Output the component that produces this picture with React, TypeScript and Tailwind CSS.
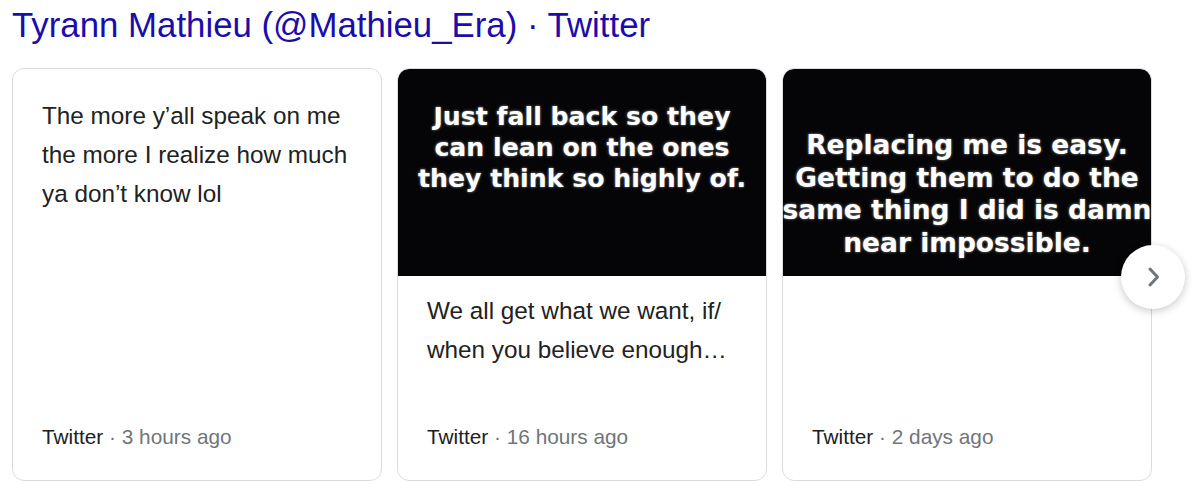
import React from "react";

const imgFont = {
  fontFamily: '"Comic Sans MS", "DejaVu Sans", sans-serif',
};

function Footer({ when }: { when: string }) {
  return (
    <div className="px-[29px] pb-[29px] text-[20.8px] leading-[28px] whitespace-nowrap">
      <span className="text-[#202124]">Twitter</span>
      <span className="text-[#70757a]"> · {when}</span>
    </div>
  );
}

export default function App() {
  return (
    <div
      className="relative w-[1198px] h-[484px] bg-white overflow-hidden"
      style={{ fontFamily: '"Liberation Sans", Arial, sans-serif' }}
    >
      <div className="pl-[12px] pt-[5px] text-[34.8px] leading-[40px] text-[#1a0dab] whitespace-nowrap">
        Tyrann Mathieu (@Mathieu_Era) · Twitter
      </div>

      <div className="flex gap-[15px] pl-[12px] mt-[23px]">
        {/* Card 1 */}
        <div className="w-[370px] h-[413px] shrink-0 border border-[#dadce0] rounded-[12px] flex flex-col bg-white">
          <div className="flex-1 px-[29px] pt-[27px] text-[24.3px] leading-[39px] text-[#222]">
            The more y’all speak on me
            <br />
            the more I realize how much
            <br />
            ya don’t know lol
          </div>
          <Footer when="3 hours ago" />
        </div>

        {/* Card 2 */}
        <div className="w-[370px] h-[413px] shrink-0 border border-[#dadce0] rounded-[12px] flex flex-col bg-white overflow-hidden">
          <div
            className="h-[207px] shrink-0 bg-[#050507] rounded-t-[11px] overflow-hidden flex flex-col items-center pt-[32px] text-white font-bold text-[25.2px] leading-[31px] whitespace-nowrap [text-shadow:0_0_3px_rgba(255,255,255,0.55)]"
            style={imgFont}
          >
            <div>Just fall back so they</div>
            <div>can lean on the ones</div>
            <div>they think so highly of.</div>
          </div>
          <div className="flex-1 px-[29px] pt-[15px] text-[24.3px] leading-[39px] text-[#222]">
            We all get what we want, if/
            <br />
            when you believe enough…
          </div>
          <Footer when="16 hours ago" />
        </div>

        {/* Card 3 */}
        <div className="w-[370px] h-[413px] shrink-0 border border-[#dadce0] rounded-[12px] flex flex-col bg-white overflow-hidden">
          <div
            className="h-[207px] shrink-0 bg-[#050507] rounded-t-[11px] overflow-hidden flex flex-col items-center pt-[60px] text-white font-bold text-[26.5px] leading-[32.5px] whitespace-nowrap [text-shadow:0_0_3px_rgba(255,255,255,0.55)]"
            style={imgFont}
          >
            <div>Replacing me is easy.</div>
            <div>Getting them to do the</div>
            <div>same thing I did is damn</div>
            <div>near impossible.</div>
          </div>
          <div className="flex-1" />
          <Footer when="2 days ago" />
        </div>
      </div>

      {/* Next button */}
      <div className="absolute left-[1121px] top-[245px] w-[64px] h-[64px] rounded-full bg-white shadow-[0_2px_8px_rgba(0,0,0,0.22)] flex items-center justify-center">
        <svg width="14" height="22" viewBox="0 0 14 22" className="ml-[2px]">
          <path d="M3 3 L10.5 11 L3 19" fill="none" stroke="#70757a" strokeWidth="3" strokeLinecap="round" strokeLinejoin="round" />
        </svg>
      </div>
    </div>
  );
}
